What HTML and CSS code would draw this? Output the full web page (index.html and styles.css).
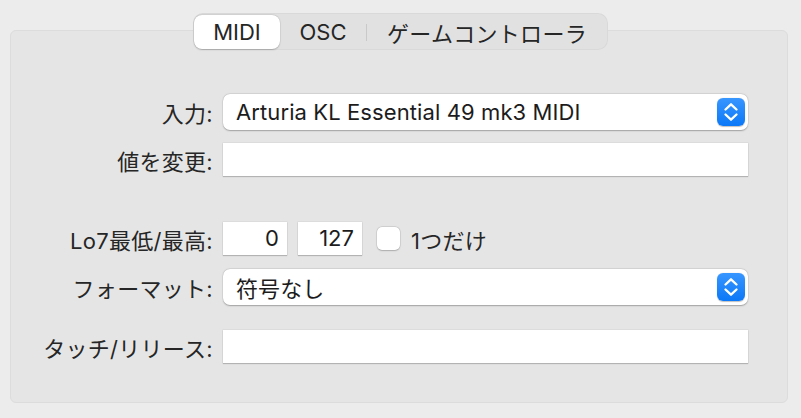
FILE: index.html
```html
<!DOCTYPE html>
<html lang="ja">
<head>
<meta charset="utf-8">
<title>MIDI</title>
<link rel="stylesheet" href="styles.css">
</head>
<body>
<div class="window">
  <div class="tabs-wrap">
    <div class="tabs">
      <div class="tab tab-midi active">MIDI</div>
      <div class="tab tab-osc">OSC</div>
      <div class="tab-sep"></div>
      <div class="tab tab-game">ゲームコントローラ</div>
    </div>
  </div>
  <div class="panel">
    <div class="row row-input">
      <div class="label">入力:</div>
      <div class="popup">
        <span class="popup-text">Arturia KL Essential 49 mk3 MIDI</span>
        <span class="stepper"><svg viewBox="0 0 28 28" width="28" height="28"><path d="M8.5 11.5 L14 6.3 L19.5 11.5 M8.5 16.5 L14 21.7 L19.5 16.5" fill="none" stroke="#fff" stroke-width="2.3" stroke-linecap="round" stroke-linejoin="round"/></svg></span>
      </div>
    </div>
    <div class="row row-change">
      <div class="label">値を変更:</div>
      <div class="field"></div>
    </div>
    <div class="row row-lo7">
      <div class="label">Lo7最低/最高:</div>
      <div class="inline">
        <div class="field num">0</div>
        <div class="field num">127</div>
        <div class="checkbox"></div>
        <span class="check-label">1つだけ</span>
      </div>
    </div>
    <div class="row row-format">
      <div class="label">フォーマット:</div>
      <div class="popup">
        <span class="popup-text">符号なし</span>
        <span class="stepper"><svg viewBox="0 0 28 28" width="28" height="28"><path d="M8.5 11.5 L14 6.3 L19.5 11.5 M8.5 16.5 L14 21.7 L19.5 16.5" fill="none" stroke="#fff" stroke-width="2.3" stroke-linecap="round" stroke-linejoin="round"/></svg></span>
      </div>
    </div>
    <div class="row row-touch">
      <div class="label">タッチ/リリース:</div>
      <div class="field"></div>
    </div>
  </div>
</div>
</body>
</html>
```

FILE: styles.css
```css
* { box-sizing: border-box; }

html, body {
  margin: 0;
  padding: 0;
  background: #ececec;
}

body {
  font-family: "Inter", "Noto Sans CJK JP", sans-serif;
  font-size: 22px;
  color: #1f1f1f;
  width: 801px;
  height: 418px;
  overflow: hidden;
}

.window {
  padding-top: 13px;
}

.tabs-wrap {
  display: flex;
  justify-content: center;
  position: relative;
  z-index: 1;
  margin-bottom: -20px;
}

.tabs {
  width: 415px;
  height: 37px;
  display: flex;
  align-items: center;
  padding: 2px 1px 1px 1px;
  background: #e1e1e1;
  border-radius: 10px;
  box-shadow: inset 0 0 0 1px rgba(0,0,0,0.035);
}

.tab {
  height: 34px;
  display: flex;
  align-items: center;
  justify-content: center;
  color: #262626;
  border-radius: 8px;
}

.tab-midi { width: 86px; }
.tab-osc { width: 86px; }
.tab-game { flex: 1; }

.tab.active {
  background: #ffffff;
  box-shadow: 0 0.5px 1.5px rgba(0,0,0,0.22), 0 0 0 0.5px rgba(0,0,0,0.06);
}

.tab-sep {
  width: 1px;
  height: 17px;
  background: #c9c9c9;
}

.panel {
  margin-left: 10px;
  width: 778px;
  height: 373px;
  background: #e5e5e5;
  border: 1px solid #dcdcdc;
  border-radius: 6px;
  padding: 63px 39px 0 0;
  display: flex;
  flex-direction: column;
}

.row {
  display: grid;
  grid-template-columns: 202px 1fr;
  column-gap: 10px;
  align-items: center;
}

.row-change { margin-top: 13px; }
.row-lo7 { margin-top: 46px; }
.row-format { margin-top: 14px; }
.row-touch { margin-top: 25px; }

.label {
  text-align: right;
  color: #262626;
  white-space: nowrap;
}

.label, .tab-game, .check-label {
  letter-spacing: 0.3px;
}

.popup {
  height: 36px;
  background: #ffffff;
  border-radius: 7px;
  box-shadow: 0 0.5px 1.5px rgba(0,0,0,0.28), 0 0 0 0.5px rgba(0,0,0,0.06);
  display: flex;
  align-items: center;
  justify-content: space-between;
  padding: 0 3px 0 13px;
}

.popup-text {
  color: #1c1c1c;
  letter-spacing: 0.1px;
}

.stepper {
  width: 28px;
  height: 28px;
  border-radius: 6px;
  background: linear-gradient(#3896ff, #0b78f7);
  box-shadow: 0 0.5px 1px rgba(0,0,0,0.25);
  display: flex;
}

.field {
  height: 33px;
  background: #ffffff;
  box-shadow: 0 0 0 0.5px rgba(0,0,0,0.08), 0 1px 1px rgba(0,0,0,0.18);
}

.inline {
  display: flex;
  align-items: center;
}

.field.num {
  width: 64px;
  text-align: right;
  padding-right: 8px;
  line-height: 33px;
  color: #1c1c1c;
  margin-right: 11px;
}

.checkbox {
  width: 23px;
  height: 23px;
  margin-left: 4px;
  background: #ffffff;
  border-radius: 5px;
  box-shadow: 0 0 0 0.5px rgba(0,0,0,0.12), 0 0.5px 1.5px rgba(0,0,0,0.2);
}

.check-label {
  margin-left: 11px;
  color: #262626;
}
```
